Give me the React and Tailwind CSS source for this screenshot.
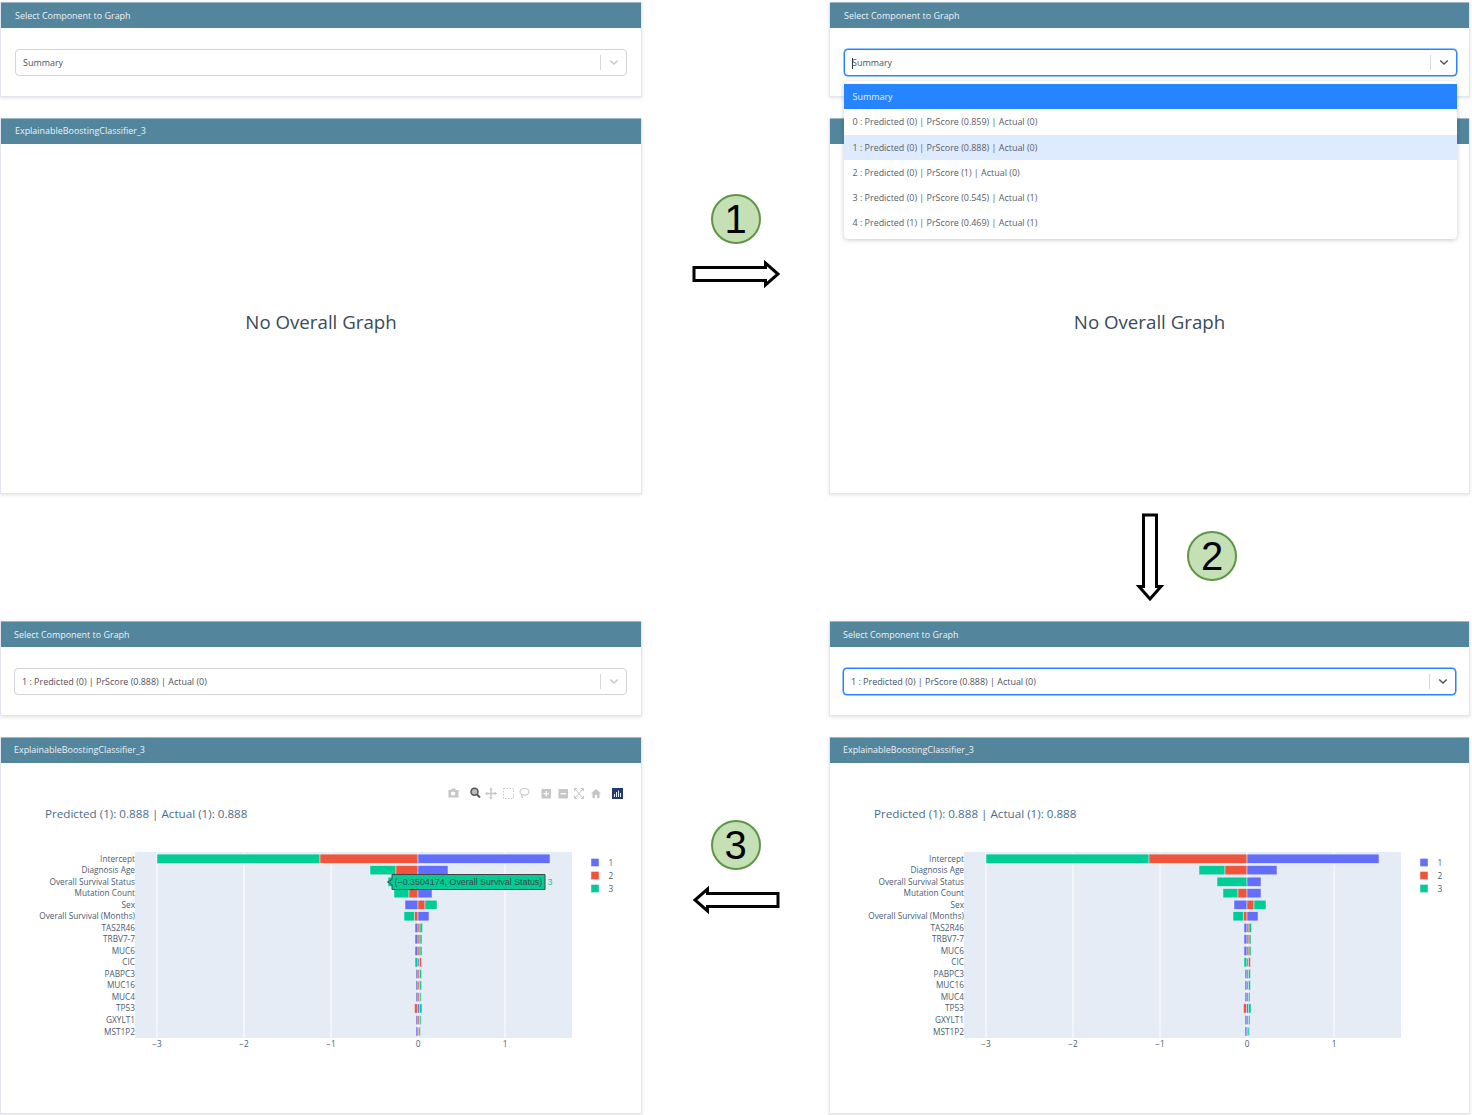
const FONT = { fontFamily: '"Open Sans", sans-serif' };
const BLUE = "#636efa", RED = "#ef553b", GREEN = "#00cc96";
const OPTIONS = [
  "Summary",
  "0 : Predicted (0) | PrScore (0.859) | Actual (0)",
  "1 : Predicted (0) | PrScore (0.888) | Actual (0)",
  "2 : Predicted (0) | PrScore (1) | Actual (0)",
  "3 : Predicted (0) | PrScore (0.545) | Actual (1)",
  "4 : Predicted (1) | PrScore (0.469) | Actual (1)",
];
const SELECTED = OPTIONS[2];

// [label, [[x0, x1, colour], ...]] offsets in px from the zero line
const ROWS = [
  ["Intercept", [[-261, -98, GREEN], [-98, 0, RED], [0, 132, BLUE]]],
  ["Diagnosis Age", [[-48, -22, GREEN], [-22, 0, RED], [0, 30, BLUE]]],
  ["Overall Survival Status", [[-30, 0, GREEN], [0, 14, BLUE]]],
  ["Mutation Count", [[-24, -9, GREEN], [-9, 0, RED], [0, 14, BLUE]]],
  ["Sex", [[-13, 0, BLUE], [0, 7, RED], [7, 19, GREEN]]],
  ["Overall Survival (Months)", [[-14, -3.5, GREEN], [-3.5, 0, RED], [0, 11, BLUE]]],
  ["TAS2R46", [[-3, 0, BLUE], [0, 2, RED], [2, 4.5, GREEN]]],
  ["TRBV7-7", [[-3, 0, BLUE], [0, 2, RED], [2, 4, GREEN]]],
  ["MUC6", [[-3, 0, BLUE], [0, 2, RED], [2, 4, GREEN]]],
  ["CIC", [[-3, 0, GREEN], [0, 1.5, BLUE], [1.5, 3.5, RED]]],
  ["PABPC3", [[-2, 0, BLUE], [0, 1.5, RED], [1.5, 3.5, GREEN]]],
  ["MUC16", [[-2, 0, BLUE], [0, 1.5, RED], [1.5, 3.5, GREEN]]],
  ["MUC4", [[-2, 0, BLUE], [0, 1.5, RED], [1.5, 3, GREEN]]],
  ["TP53", [[-3.5, -0.5, RED], [-0.5, 1.5, BLUE], [1.5, 4, GREEN]]],
  ["GXYLT1", [[-2, 0, BLUE], [0, 1.5, RED], [1.5, 3, GREEN]]],
  ["MST1P2", [[-2, 0, BLUE], [0, 1, RED], [1, 2.5, GREEN]]],
];
const TICKS = [[-3, "\u22123"], [-2, "\u22122"], [-1, "\u22121"], [0, "0"], [1, "1"]];

function ModeBar() {
  const g = "#c6c6c6";
  return (
    <g>
      {/* camera */}
      <path d="M448.5 27h2.5l1-1.500h3l1 1.500h2.500v7.500h-10z" fill={g} />
      <circle cx="453" cy="30.600" r="2.200" fill="#fff" />
      {/* zoom */}
      <circle cx="474.500" cy="28.800" r="3.500" fill="#bbb" stroke="#555" strokeWidth="1.500" />
      <path d="M477 31.500l3 3" stroke="#555" strokeWidth="2" />
      {/* pan */}
      <path d="M491 25.500v10M486 30.500h10" stroke={g} strokeWidth="1.300" />
      <path d="M491 24.500l-1.800 2.200h3.600zM491 36.500l-1.800-2.200h3.600zM485 30.500l2.200-1.800v3.600zM497 30.500l-2.200-1.800v3.600z" fill={g} />
      {/* box select */}
      <rect x="503.500" y="25.500" width="10" height="10" fill="none" stroke={g} strokeWidth="1" strokeDasharray="1.500 1.500" />
      {/* lasso */}
      <ellipse cx="524.500" cy="28.800" rx="4.500" ry="3.300" fill="none" stroke={g} strokeWidth="1.100" />
      <path d="M521.500 31.500c0 1.500 1 3 1.500 3.500" fill="none" stroke={g} strokeWidth="1.100" />
      {/* zoom in / out */}
      <rect x="541.500" y="26" width="9.500" height="9.500" rx="0.800" fill={g} />
      <path d="M546.300 28v5.500M543.500 30.700h5.500" stroke="#fff" strokeWidth="1.300" />
      <rect x="558.500" y="26" width="9.500" height="9.500" rx="0.800" fill={g} />
      <path d="M560.500 30.700h5.500" stroke="#fff" strokeWidth="1.300" />
      {/* autoscale */}
      <path d="M574.500 25.500h2.500M574.500 25.500v2.500M583.500 25.500h-2.500M583.500 25.500v2.500M574.500 35.500h2.500M574.500 35.500v-2.500M583.500 35.500h-2.500M583.500 35.500v-2.500M575 26l8 9M583 26l-8 9" fill="none" stroke={g} strokeWidth="1" />
      {/* home */}
      <path d="M591 30.500l5-4.500 5 4.500h-1.500v4.500h-2.500v-3h-2v3h-2.500v-4.500z" fill={g} />
      {/* plotly logo */}
      <rect x="612" y="25" width="11" height="11" fill="#1f3b70" />
      <path d="M614.500 31v3M616.500 29v5M618.500 27.500v6.500M620.500 30v4" stroke="#e8ecf4" strokeWidth="1" />
    </g>
  );
}

function Chart({ hover }) {
  // svg origin: panel left edge, 763px page y
  const zero = 418;
  const unit = 87;
  return (
    <svg width="641" height="350" className="block -ml-px" style={FONT}>
      {hover && <ModeBar />}
      <text x="45" y="55" fontSize="11.650" fill="#4a6d8c">
        Predicted (1): 0.888 | Actual (1): 0.888
      </text>
      <rect x="135" y="89" width="437" height="186" fill="#e5ecf6" />
      {TICKS.map(([t]) => (
        <line key={t} x1={zero + t * unit} x2={zero + t * unit} y1="89" y2="275" stroke="#fff" strokeWidth={t === 0 ? 1.500 : 1} />
      ))}
      {ROWS.map(([label, bars], i) => {
        const cy = 95.700 + i * 11.520;
        return (
          <g key={label}>
            <text x="135" y={cy + 3} textAnchor="end" fontSize="8.250" fill="#4a5a70">{label}</text>
            {bars.map(([a, b, c]) => (
              <rect key={c} x={zero + a} y={cy - 4.600} width={b - a} height="9.200" fill={c} stroke="#e9edf8" strokeWidth="0.500" />
            ))}
          </g>
        );
      })}
      {TICKS.map(([t, s]) => (
        <text key={t} x={zero + t * unit} y="284" textAnchor="middle" fontSize="8.250" fill="#4a5a70">{s}</text>
      ))}
      {[[BLUE, "1"], [RED, "2"], [GREEN, "3"]].map(([c, s], i) => (
        <g key={s}>
          <rect x="591" y={95.500 + i * 13} width="8" height="8" fill={c} stroke="#e9edf8" strokeWidth="0.500" />
          <text x="608.500" y={102.500 + i * 13} fontSize="8.250" fill="#4a5a70">{s}</text>
        </g>
      ))}
      {hover && (
        <g>
          <path d="M392 111.500v5l-4.500 2.500 4.500 2.500v5h153v-15z" fill={GREEN} stroke="#444" strokeWidth="1" />
          <text x="394.500" y="122" fontSize="8.900" fill="#444" style={{ fontFamily: '"Liberation Sans", sans-serif' }}>
            (−0.3504174, Overall Survival Status)
          </text>
          <text x="547.500" y="122" fontSize="8.900" fill={GREEN} style={{ fontFamily: '"Liberation Sans", sans-serif' }}>3</text>
        </g>
      )}
    </svg>
  );
}

function Card({ title, children, bodyClass = "", titleClass = "" }) {
  return (
    <div className={"bg-white border border-[#e3e6f0] border-t-0 shadow-[0_1px_3px_rgba(58,59,69,0.15)] " + bodyClass}>
      <div className={"h-[26px] bg-[#53859d] border-t border-[#9db8c6] flex items-center text-[8.950px] text-[#eef3f6] " + titleClass}>
        {title}
      </div>
      {children}
    </div>
  );
}

function Select({ value, focused, cursor }) {
  return (
    <div
      className={
        "h-[27px] rounded-[4px] bg-white flex items-center " +
        (focused ? "border border-[#2684ff] shadow-[0_0_0_0.5px_#2684ff]" : "border border-[#d4d4d4]")
      }
    >
      <span className="flex-1 pl-[7px] pt-px text-[8.950px] text-[#4d5060] leading-none flex items-center">
        {cursor && <span className="w-px h-[11px] bg-[#333] mr-[-1px]" />}
        {value}
      </span>
      <span className="w-px h-[15px] bg-[#d8d8d8]" />
      <span className="w-[25px] flex justify-center">
        <svg width="10" height="7" viewBox="0 0 10 7">
          <path d="M1.200 1.500L5 5l3.800-3.500" fill="none" stroke={focused ? "#555" : "#c8c8c8"} strokeWidth="1.500" />
        </svg>
      </span>
    </div>
  );
}

function Dashboard({ value, focused, cursor, chart, hover, menu, selectPad, titlePad }) {
  return (
    <div className="relative flex flex-col">
      <Card title="Select Component to Graph" bodyClass="h-[95px]" titleClass={titlePad}>
        <div className={"pt-[21px] " + selectPad}>
          <Select value={value} focused={focused} cursor={cursor} />
        </div>
      </Card>
      <div className="h-[21px]" />
      <Card title="ExplainableBoostingClassifier_3" bodyClass={chart ? "h-[377px]" : "h-[376px]"} titleClass={titlePad + " pb-[2px]"}>
        {chart ? (
          <Chart hover={hover} />
        ) : (
          <div className="h-[350px] flex items-center justify-center pt-[6px] text-[18.700px] text-[#3b4a5a]">
            No Overall Graph
          </div>
        )}
      </Card>
      {menu && (
        <div className="absolute left-[15px] top-[79px] w-[613px] h-[158px] bg-white rounded-[4px] shadow-[0_1px_5px_rgba(0,0,0,0.22)] pt-[3px] text-[8.950px] text-[#5a5c69]">
          {OPTIONS.map((o, i) => (
            <div
              key={o}
              className={
                "h-[25.300px] flex items-center pl-[8.500px] " +
                (i === 0 ? "bg-[#2684ff] text-[#eaf3ff]" : i === 2 ? "bg-[#deebff]" : "")
              }
            >
              {o}
            </div>
          ))}
        </div>
      )}
    </div>
  );
}

function Step({ n }) {
  return (
    <div
      className="w-[50px] h-[50px] rounded-full bg-[#c5e0b4] border-2 border-[#5f9548] flex items-center justify-center text-[40px] leading-none text-black shrink-0"
      style={{ fontFamily: '"Liberation Sans", sans-serif' }}
    >
      {n}
    </div>
  );
}

export default function App() {
  return (
    <div className="w-[1472px] h-[1115px] bg-white overflow-hidden pt-[2px]" style={FONT}>
      <div className="grid grid-cols-[642px_187px_641px] grid-rows-[492px_127px_494px]">
        <Dashboard value="Summary" selectPad="pl-[14px] pr-[14px]" titlePad="px-[14px]" />
        <div className="flex flex-col items-center pt-[192px]">
          <Step n="1" />
          <svg width="90" height="32" viewBox="0 0 90 32" className="mt-[14px] ml-[2px]">
            <path d="M2 9.500h71.500V5L86 16 73.500 27v-4.500H2z" fill="#fff" stroke="#000" strokeWidth="3" />
          </svg>
        </div>
        <Dashboard value="Summary" focused cursor menu selectPad="pl-[14px] pr-[12px]" titlePad="px-[14px]" />

        <div />
        <div />
        <div className="flex items-start pt-[19px] pl-[304px]">
          <svg width="34" height="90" viewBox="0 0 34 90">
            <path d="M10.500 2h13v71.500H28L17 86 6 73.500h4.500z" fill="#fff" stroke="#000" strokeWidth="3" />
          </svg>
          <div className="mt-[18px] ml-[20px]">
            <Step n="2" />
          </div>
        </div>

        <Dashboard value={SELECTED} chart hover selectPad="pl-[13px] pr-[14px]" titlePad="px-[13px]" />
        <div className="flex flex-col items-center pt-[199px]">
          <Step n="3" />
          <svg width="90" height="32" viewBox="0 0 90 32" className="mt-[14px]">
            <path d="M87 9.500H16.500V5L4 16l12.500 11v-4.500H87z" fill="#fff" stroke="#000" strokeWidth="3" />
          </svg>
        </div>
        <Dashboard value={SELECTED} focused chart selectPad="pl-[13px] pr-[13px]" titlePad="px-[13px]" />
      </div>
    </div>
  );
}
